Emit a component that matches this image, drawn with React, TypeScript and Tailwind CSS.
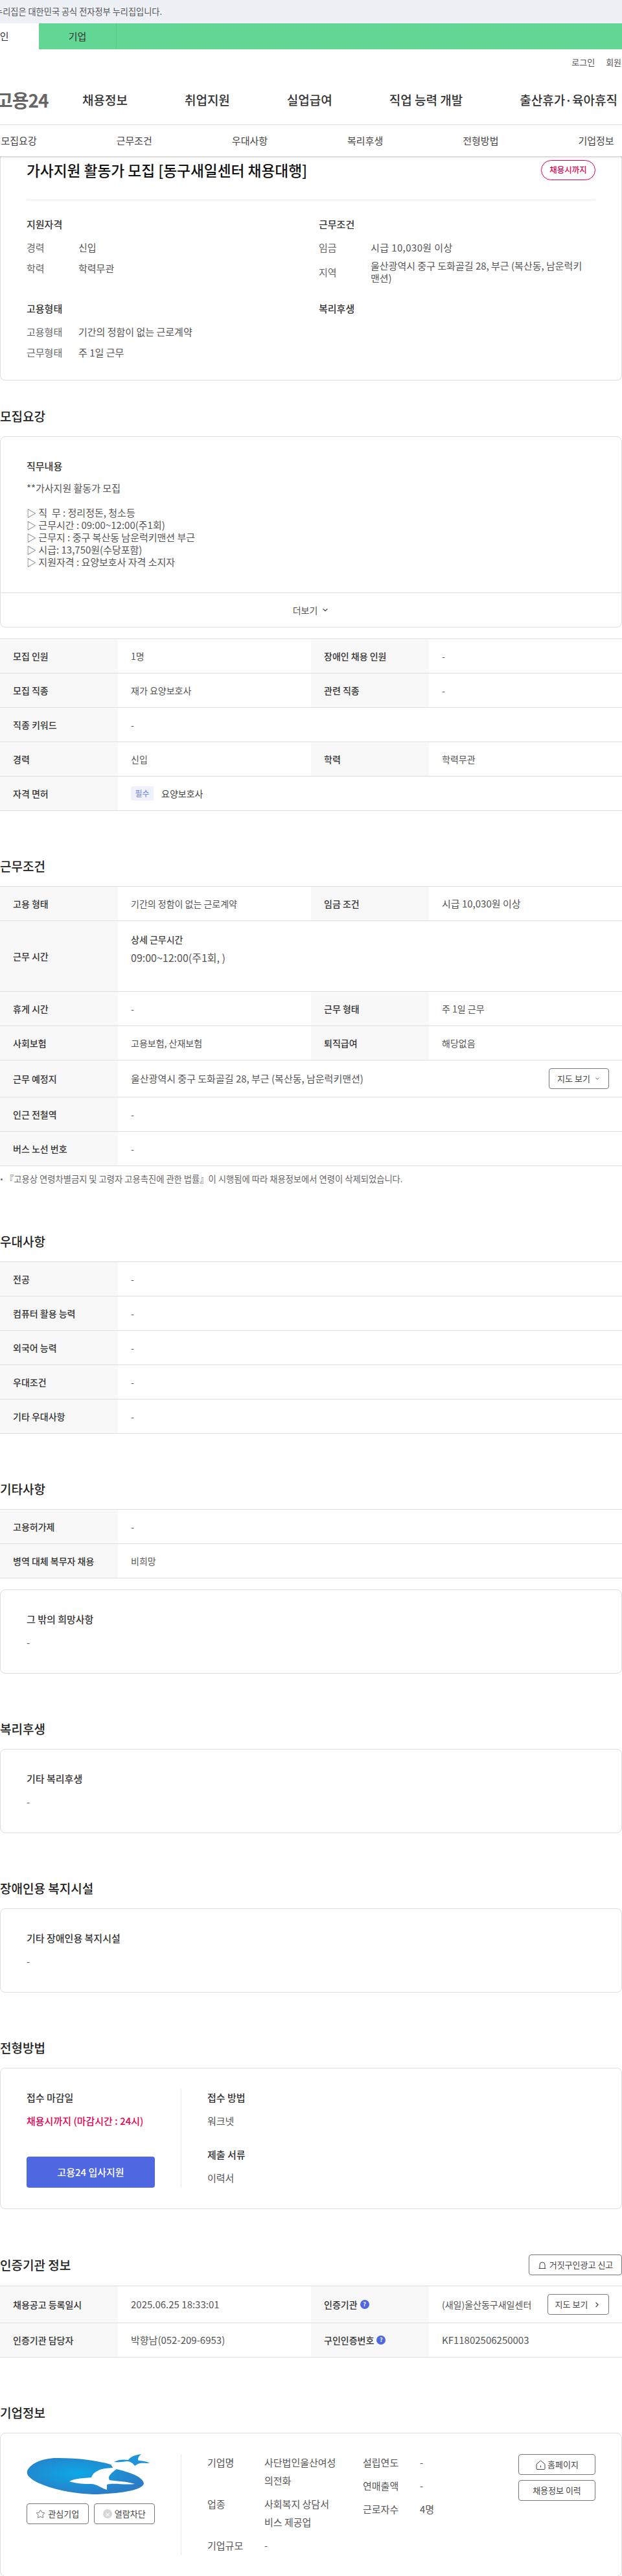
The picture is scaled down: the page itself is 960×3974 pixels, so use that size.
import React from "react";
import { ChevronDown, ChevronRight, Star } from "lucide-react";

const Heading = ({ children, className = "" }: { children: React.ReactNode; className?: string }) => (
  <h2 className={"h-[28px] leading-[28px] mb-[17px] text-[19px] font-medium text-[#222] " + className}>{children}</h2>
);

const Row = ({ label, value, label2, value2, h = "h-[53px]" }: { label: React.ReactNode; value: React.ReactNode; label2?: React.ReactNode; value2?: React.ReactNode; h?: string }) => (
  <div className={"flex border-b border-[#ddd] text-[14px] " + h}>
    <div className="w-[182px] shrink-0 bg-[#f8f8f8] pl-5 flex items-center font-medium text-[#333]">{label}</div>
    <div className={(label2 ? "w-[298px] shrink-0 " : "flex-1 ") + "pl-5 pr-5 flex items-center text-[#555]"}>{value}</div>
    {label2 && (
      <>
        <div className="w-[182px] shrink-0 bg-[#f8f8f8] pl-5 flex items-center font-medium text-[#333]">{label2}</div>
        <div className="flex-1 pl-5 pr-5 flex items-center justify-between text-[#555]">{value2}</div>
      </>
    )}
  </div>
);

const Table = ({ children }: { children: React.ReactNode }) => <div className="border-t border-[#ddd]">{children}</div>;

const Card = ({ title, className = "" }: { title: string; className?: string }) => (
  <div className={"h-[130px] border border-[#ddd] rounded-lg px-10 pt-[34px] text-[15px] " + className}>
    <div className="h-[22px] leading-[22px] font-medium text-[#333]">{title}</div>
    <div className="h-[22px] leading-[22px] mt-[14px] text-[#555]">-</div>
  </div>
);

const OutlineBtn = ({ children, className = "" }: { children: React.ReactNode; className?: string }) => (
  <button className={"h-8 border border-[#777] rounded-[4px] bg-white flex items-center justify-center text-[13px] text-[#444] " + className}>{children}</button>
);

const Help = () => (
  <span className="ml-[4px] w-[14px] h-[14px] rounded-full bg-[#5067e2] text-white text-[9px] font-bold flex items-center justify-center">?</span>
);

const InfoRow = ({ label, value }: { label: string; value: string }) => (
  <div className="flex text-[15px] leading-[28px] text-[#555]">
    <div className="w-[88px] shrink-0">{label}</div>
    <div className="w-[112px] break-all">{value}</div>
  </div>
);

export default function App() {
  return (
    <div className="w-[960px] h-[3974px] overflow-hidden bg-white font-['Noto_Sans_CJK_KR','Noto_Sans',sans-serif] text-[#444]">
      <div className="h-9 bg-[#edf0f5] flex items-center text-[13.2px] text-[#555]">
        <span className="-ml-[8px] whitespace-nowrap">누리집은 대한민국 공식 전자정부 누리집입니다.</span>
      </div>
      <div className="h-10 bg-[#62d694] flex text-[15px] text-[#333]">
        <div className="w-[60px] shrink-0 bg-white flex items-center">
          <span className="-ml-[14px] whitespace-nowrap">개인</span>
        </div>
        <div className="w-[120px] border-r border-[#57c987] flex items-center justify-center">기업</div>
      </div>

      <div className="h-10 flex items-center justify-end gap-[17px] text-[13px] text-[#555] -mr-[23px]">
        <span>로그인</span>
        <span>회원가입</span>
      </div>

      <div className="h-[77px] border-b border-[#e8e8e8] flex items-center">
        <span className="-ml-[6px] w-[80px] shrink-0 text-[28px] font-bold tracking-[-1px] text-[#666] whitespace-nowrap">고용24</span>
        <nav className="ml-[53px] flex gap-[88px] text-[19px] font-medium text-[#333] whitespace-nowrap">
          <span>채용정보</span>
          <span>취업지원</span>
          <span>실업급여</span>
          <span>직업 능력 개발</span>
          <span>출산휴가·육아휴직</span>
        </nav>
      </div>

      <div className="relative z-10 h-12 bg-white shadow-[0_1px_3px_rgba(0,0,0,0.25)] flex -ml-[60px] w-[1080px] text-[15px] text-[#444]">
        {["모집요강", "근무조건", "우대사항", "복리후생", "전형방법", "기업정보"].map((t) => (
          <div key={t} className="w-[178.2px] flex items-center justify-center">{t}</div>
        ))}
      </div>

      <div className="h-[346px] border border-t-0 border-[#ddd] rounded-b-lg px-10 pt-[6px]">
        <div className="h-[62px] border-b border-[#e8e8e8] flex items-start justify-between">
          <h1 className="h-[31px] leading-[31px] text-[22.7px] font-medium text-[#111]">가사지원 활동가 모집 [동구새일센터 채용대행]</h1>
          <span className="w-[84px] h-[31px] rounded-full border border-[#e5004f] text-[#e5004f] text-[12.5px] font-medium flex items-center justify-center">채용시까지</span>
        </div>
        <div className="grid grid-cols-[451px_1fr] mt-[26px] text-[15px] text-[#555]">
          <div>
            <div className="h-[22px] leading-[22px] font-medium text-[#333] mb-[9px]">지원자격</div>
            <div className="h-8 flex items-center"><span className="w-20 text-[#666]">경력</span><span>신입</span></div>
            <div className="h-8 flex items-center"><span className="w-20 text-[#666]">학력</span><span>학력무관</span></div>
          </div>
          <div>
            <div className="h-[22px] leading-[22px] font-medium text-[#333] mb-[9px]">근무조건</div>
            <div className="h-8 flex items-center"><span className="w-20 text-[#666]">임금</span><span className="tracking-[0.4px]">시급 10,030원 이상</span></div>
            <div className="flex items-center mt-[2px] leading-[19px]">
              <span className="w-20 shrink-0 text-[#666]">지역</span>
              <span>울산광역시 중구 도화골길 28, 부근 (복산동, 남운럭키<br />맨션)</span>
            </div>
          </div>
          <div className="mt-[27px]">
            <div className="h-[22px] leading-[22px] font-medium text-[#333] mb-[9px]">고용형태</div>
            <div className="h-8 flex items-center"><span className="w-20 text-[#666]">고용형태</span><span>기간의 정함이 없는 근로계약</span></div>
            <div className="h-8 flex items-center"><span className="w-20 text-[#666]">근무형태</span><span>주 1일 근무</span></div>
          </div>
          <div className="mt-[27px]">
            <div className="h-[22px] leading-[22px] font-medium text-[#333]">복리후생</div>
          </div>
        </div>
      </div>

      <section className="mt-[41px]">
        <Heading>모집요강</Heading>
        <div className="border border-[#ddd] rounded-lg">
          <div className="h-[240px] px-10 pt-[34px] text-[15px]">
            <div className="h-[22px] leading-[22px] font-medium text-[#333] mb-[13px]">직무내용</div>
            <div className="leading-[19px] text-[#555] whitespace-pre">
              <div>**가사지원 활동가 모집</div>
              <div>&nbsp;</div>
              <div>▷ 직  무 : 정리정돈, 청소등</div>
              <div>▷ 근무시간 : 09:00~12:00(주1회)</div>
              <div>▷ 근무지 : 중구 복산동 남운럭키맨션 부근</div>
              <div>▷ 시급: 13,750원(수당포함)</div>
              <div>▷ 지원자격 : 요양보호사 자격 소지자</div>
            </div>
          </div>
          <div className="h-[53px] border-t border-[#ddd] flex items-center justify-center gap-[6px] text-[14px] text-[#555]">
            더보기 <ChevronDown size={12} strokeWidth={2.5} />
          </div>
        </div>
        <div className="mt-[17px]">
          <Table>
            <Row label="모집 인원" value="1명" label2="장애인 채용 인원" value2="-" />
            <Row label="모집 직종" value="재가 요양보호사" label2="관련 직종" value2="-" />
            <Row label="직종 키워드" value="-" />
            <Row label="경력" value="신입" label2="학력" value2="학력무관" />
            <Row
              label="자격 면허"
              value={
                <>
                  <span className="w-[35px] h-[22px] rounded-[3px] bg-[#eff1fd] text-[#6e80ee] text-[12px] flex items-center justify-center">필수</span>
                  <span className="ml-3 text-[#444]">요양보호사</span>
                </>
              }
            />
          </Table>
        </div>
      </section>

      <section className="mt-[71px]">
        <Heading>근무조건</Heading>
        <Table>
          <Row label="고용 형태" value="기간의 정함이 없는 근로계약" label2="임금 조건" value2={<span className="text-[15px]">시급 10,030원 이상</span>} />
          <Row
            label="근무 시간"
            h="h-[109px]"
            value={
              <div className="self-start pt-[14px]">
                <div className="h-[28px] leading-[28px] font-medium text-[#444]">상세 근무시간</div>
                <div className="h-[28px] leading-[28px] text-[16px]">09:00~12:00(주1회, )</div>
              </div>
            }
          />
          <Row label="휴게 시간" value="-" label2="근무 형태" value2="주 1일 근무" />
          <Row label="사회보험" value="고용보험, 산재보험" label2="퇴직급여" value2="해당없음" />
          <div className="flex h-[57px] border-b border-[#ddd] text-[14px]">
            <div className="w-[182px] shrink-0 bg-[#f8f8f8] pl-5 flex items-center font-medium text-[#333]">근무 예정지</div>
            <div className="flex-1 pl-5 pr-5 flex items-center justify-between text-[#555]">
              <span className="text-[15px]">울산광역시 중구 도화골길 28, 부근 (복산동, 남운럭키맨션)</span>
              <OutlineBtn className="w-[93px] gap-[6px]">지도 보기 <ChevronDown size={10} strokeWidth={2} /></OutlineBtn>
            </div>
          </div>
          <Row label="인근 전철역" value="-" />
          <Row label="버스 노선 번호" value="-" />
        </Table>
        <p className="mt-[9px] mb-[1px] h-[22px] leading-[22px] text-[13.3px] text-[#666] flex items-center whitespace-nowrap">
          <span className="ml-[1px] mr-[4px] w-[3px] h-[3px] rounded-full bg-[#666]"></span>
          <span>『고용상 연령차별금지 및 고령자 고용촉진에 관한 법률』이 시행됨에 따라 채용정보에서 연령이 삭제되었습니다.</span>
        </p>
      </section>

      <section className="mt-[71px]">
        <Heading>우대사항</Heading>
        <Table>
          <Row label="전공" value="-" />
          <Row label="컴퓨터 활용 능력" value="-" />
          <Row label="외국어 능력" value="-" />
          <Row label="우대조건" value="-" />
          <Row label="기타 우대사항" value="-" />
        </Table>
      </section>

      <section className="mt-[71px]">
        <Heading>기타사항</Heading>
        <Table>
          <Row label="고용허가제" value="-" />
          <Row label="병역 대체 복무자 채용" value="비희망" />
        </Table>
        <Card title="그 밖의 희망사항" className="mt-[17px]" />
      </section>

      <section className="mt-[71px]">
        <Heading>복리후생</Heading>
        <Card title="기타 복리후생" />
      </section>

      <section className="mt-[71px]">
        <Heading>장애인용 복지시설</Heading>
        <Card title="기타 장애인용 복지시설" />
      </section>

      <section className="mt-[71px]">
        <Heading>전형방법</Heading>
        <div className="h-[218px] border border-[#ddd] rounded-lg px-10 pt-8 text-[15px]">
          <div className="flex h-[152px]">
            <div className="w-[239px] shrink-0 border-r border-[#e8e8e8] pr-10 flex flex-col justify-between">
              <div className="pt-[2px]">
                <div className="h-[22px] leading-[22px] font-medium text-[#333]">접수 마감일</div>
                <div className="h-[22px] leading-[22px] mt-[14px] font-medium text-[#e5004f]">채용시까지 (마감시간 : 24시)</div>
              </div>
              <button className="h-12 rounded-[4px] bg-[#5067e2] text-white font-medium">고용24 입사지원</button>
            </div>
            <div className="pl-10 pt-[2px]">
              <div className="h-[22px] leading-[22px] font-medium text-[#333]">접수 방법</div>
              <div className="h-[22px] leading-[22px] mt-[14px] text-[#555]">워크넷</div>
              <div className="h-[22px] leading-[22px] mt-[30px] font-medium text-[#333]">제출 서류</div>
              <div className="h-[22px] leading-[22px] mt-[14px] text-[#555]">이력서</div>
            </div>
          </div>
        </div>
      </section>

      <section className="mt-[70px]">
        <div className="flex items-center justify-between h-8 mb-4">
          <h2 className="text-[19px] font-medium leading-[28px] text-[#222]">인증기관 정보</h2>
          <OutlineBtn className="w-[144px] gap-[4px]">
            <svg width="14" height="13" viewBox="0 0 14 13" fill="none" stroke="#444" strokeWidth="1">
              <path d="M3 11.5V6a4 4 0 0 1 8 0v5.5M1.5 11.5h11" />
            </svg>
            거짓구인광고 신고
          </OutlineBtn>
        </div>
        <Table>
          <Row
            label="채용공고 등록일시"
            value={<span className="text-[15px]">2025.06.25 18:33:01</span>}
            h="h-[57px]"
            label2={<>인증기관<Help /></>}
            value2={
              <>
                <span className="whitespace-nowrap">(새일)울산동구새일센터</span>
                <OutlineBtn className="w-[95px] shrink-0 gap-[8px]">지도 보기 <ChevronRight size={13} strokeWidth={2} /></OutlineBtn>
              </>
            }
          />
          <Row label="인증기관 담당자" value={<span className="text-[15px]">박향남(052-209-6953)</span>} label2={<>구인인증번호<Help /></>} value2={<span className="text-[15px]">KF11802506250003</span>} />
        </Table>
      </section>

      <section className="mt-[71px]">
        <Heading>기업정보</Heading>
        <div className="h-[222px] border border-[#ddd] rounded-lg pl-10 pr-10 pt-8 flex">
          <div className="w-[239px] shrink-0 h-[156px] border-r border-[#e8e8e8] pr-10">
            <svg width="191" height="63" viewBox="0 0 191 63" className="block">
              <defs>
                <radialGradient id="lg" cx="42%" cy="42%" r="60%">
                  <stop offset="0%" stopColor="#0ca8e6" />
                  <stop offset="100%" stopColor="#2b7cc6" />
                </radialGradient>
              </defs>
              <path d="M1 26C5 15 25 5 50 6C80 6 110 10 130 16L134 22C150 26 178 32 181 45C180 55 150 60 110 62C70 62 30 52 10 40C3 35 0 32 1 26Z" fill="url(#lg)" />
              <path d="M66 42C75 37 90 37 100 36C102 30 108 24 122 22L143 20C132 28 124 34 128 40C140 42 155 42 167 46C150 48 135 44 124 47L124 55C116 53 108 46 100 46C90 46 78 46 66 42Z" fill="#fff" />
              <path d="M135 12C142 8 150 8 157 9C160 4 168 1 177 0C172 4 171 8 173 10C178 10 185 11 190 14C182 14 176 13 172 15L167 18C164 14 160 11 155 11C148 12 140 13 135 12Z" fill="#1f94d8" />
            </svg>
            <div className="mt-[13px] flex gap-2">
              <OutlineBtn className="w-[96px] gap-[4px]"><Star size={15} strokeWidth={1.2} />관심기업</OutlineBtn>
              <OutlineBtn className="w-[95px] gap-[4px]">
                <span className="w-[14px] h-[14px] rounded-full bg-[#d5d5d5] text-white text-[10px] flex items-center justify-center">✕</span>
                열람차단
              </OutlineBtn>
            </div>
          </div>
          <div className="w-[280px] shrink-0 pl-10 -mt-px flex flex-col gap-2">
            <InfoRow label="기업명" value="사단법인울산여성의전화" />
            <InfoRow label="업종" value="사회복지 상담서비스 제공업" />
            <InfoRow label="기업규모" value="-" />
          </div>
          <div className="flex-1 -mt-px flex flex-col gap-2">
            <InfoRow label="설립연도" value="-" />
            <InfoRow label="연매출액" value="-" />
            <InfoRow label="근로자수" value="4명" />
          </div>
          <div className="w-[119px] shrink-0 flex flex-col gap-2">
            <OutlineBtn className="gap-[2px]">
              <svg width="17" height="17" viewBox="0 0 17 17" fill="none" stroke="#444" strokeWidth="1" strokeLinejoin="round">
                <path d="M2 7.5L8.5 2L15 7.5V14.5Q15 15.5 14 15.5H3Q2 15.5 2 14.5Z" />
                <path d="M8.5 9.5V12.5" />
              </svg>
              홈페이지
            </OutlineBtn>
            <OutlineBtn>채용정보 이력</OutlineBtn>
          </div>
        </div>
      </section>
    </div>
  );
}
